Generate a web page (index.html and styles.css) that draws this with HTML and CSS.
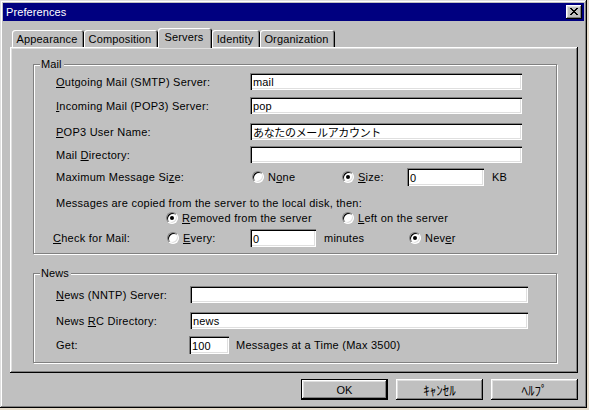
FILE: index.html
```html
<!DOCTYPE html>
<html>
<head>
<meta charset="utf-8">
<title>Preferences</title>
<link rel="stylesheet" href="styles.css">
</head>
<body>
<div class="window">
  <div class="titlebar">
    <span class="title">Preferences</span>
    <div class="close">
      <svg width="8" height="7" viewBox="0 0 8 7" shape-rendering="crispEdges">
        <rect x="0" y="0" width="2" height="1"/><rect x="6" y="0" width="2" height="1"/>
        <rect x="1" y="1" width="2" height="1"/><rect x="5" y="1" width="2" height="1"/>
        <rect x="2" y="2" width="4" height="1"/>
        <rect x="3" y="3" width="2" height="1"/>
        <rect x="2" y="4" width="4" height="1"/>
        <rect x="1" y="5" width="2" height="1"/><rect x="5" y="5" width="2" height="1"/>
        <rect x="0" y="6" width="2" height="1"/><rect x="6" y="6" width="2" height="1"/>
      </svg>
    </div>
  </div>

  <div class="body">
    <div class="tabs">
      <div class="tab t-app">Appearance</div>
      <div class="tab t-comp">Composition</div>
      <div class="tab t-serv active">Servers</div>
      <div class="tab t-id">Identity</div>
      <div class="tab t-org">Organization</div>
    </div>

    <div class="panel">
      <div class="group mail">
        <span class="legend">Mail</span>

        <div class="row mt8">
          <span class="lbl w194"><u>O</u>utgoing Mail (SMTP) Server:</span>
          <div class="field w272">mail</div>
        </div>
        <div class="row mt7">
          <span class="lbl w194"><u>I</u>ncoming Mail (POP3) Server:</span>
          <div class="field w272">pop</div>
        </div>
        <div class="row mt9">
          <span class="lbl w194"><u>P</u>OP3 User Name:</span>
          <div class="field w272 jp">あなたのメールアカウント</div>
        </div>
        <div class="row mt6">
          <span class="lbl w194">Mail <u>D</u>irectory:</span>
          <div class="field w272"></div>
        </div>
        <div class="row mt5 tall">
          <span class="lbl w196">Maximum Message Si<u>z</u>e:</span>
          <div class="opt w90"><span class="radio"></span><span>N<u>o</u>ne</span></div>
          <div class="opt w65"><span class="radio on"></span><span><u>S</u>ize:</span></div>
          <div class="field w77 h18">0</div>
          <span class="ml8">KB</span>
        </div>
        <div class="row text mt10">
          <span>Messages are copied from the server to the local disk, then:</span>
        </div>
        <div class="row text mt1 ind132">
          <div class="opt w176"><span class="radio on"></span><span><u>R</u>emoved from the server</span></div>
          <div class="opt"><span class="radio"></span><span><u>L</u>eft on the server</span></div>
        </div>
        <div class="row mt4 ind19 tall">
          <span class="lbl w114"><u>C</u>heck for Mail:</span>
          <div class="opt w83"><span class="radio"></span><span><u>E</u>very:</span></div>
          <div class="field w66 h18">0</div>
          <span class="ml8 w85">minutes</span>
          <div class="opt"><span class="radio on"></span><span>Nev<u>e</u>r</span></div>
        </div>
      </div>

      <div class="group news">
        <span class="legend">News</span>
        <div class="row mt12">
          <span class="lbl w134"><u>N</u>ews (NNTP) Server:</span>
          <div class="field w338"></div>
        </div>
        <div class="row mt9">
          <span class="lbl w134">News <u>R</u>C Directory:</span>
          <div class="field w338">news</div>
        </div>
        <div class="row mt7 tall">
          <span class="lbl w133">Get:</span>
          <div class="field w40 h18">100</div>
          <span class="ml7">Messages at a Time (Max 3500)</span>
        </div>
      </div>
    </div>

    <div class="buttons">
      <div class="btn default">OK</div>
      <div class="btn jp-btn">ｷｬﾝｾﾙ</div>
      <div class="btn jp-btn">ﾍﾙﾌﾟ</div>
    </div>
  </div>
</div>
</body>
</html>
```

FILE: styles.css
```css
html, body {
  margin: 0;
  padding: 0;
}
body {
  width: 589px;
  height: 410px;
  overflow: hidden;
  background: #e6dccb;
  font-family: "Liberation Sans", Arial, "Noto Sans CJK JP", sans-serif;
  font-size: 11px;
  color: #000;
}
u { text-decoration: underline; text-underline-offset: 1px; }

.window {
  width: 587px;
  height: 408px;
  box-sizing: border-box;
  padding: 3px;
  background: #c0c0c0;
  box-shadow: inset -1px -1px 0 #000, inset 1px 1px 0 #dfdfdf,
              inset -2px -2px 0 #808080, inset 2px 2px 0 #fff;
}

.titlebar {
  height: 18px;
  background: #000080;
  color: #fff;
  display: flex;
  align-items: center;
  justify-content: space-between;
  padding: 0 2px 0 3px;
}
.title { letter-spacing: 0.1px; }
.close {
  width: 16px;
  height: 14px;
  box-sizing: border-box;
  background: #c0c0c0;
  box-shadow: inset -1px -1px 0 #000, inset 1px 1px 0 #fff,
              inset -2px -2px 0 #808080, inset 2px 2px 0 #dfdfdf;
  display: flex;
  align-items: flex-start;
  padding: 3px 0 0 4px;
}
.close svg { display: block; fill: #000; }

.body {
  margin: 0 6px 0 7px;
}

.tabs {
  margin-top: 7px;
  height: 20px;
  display: flex;
  align-items: flex-end;
  padding-left: 2px;
}
.tab {
  height: 17px;
  margin-bottom: 1px;
  box-sizing: border-box;
  display: flex;
  align-items: center;
  justify-content: center;
  padding-right: 2px;
  padding-top: 1px;
  border-radius: 3px 3px 0 0;
  background: #c0c0c0;
  box-shadow: inset 1px 1px 0 #fff, inset -1px 0 0 #000, inset -2px 0 0 #808080;
  letter-spacing: 0.15px;
}
.tab.active {
  height: 20px;
  margin-bottom: 0;
  padding-top: 0;
  padding-bottom: 2px;
  position: relative;
  z-index: 2;
}
.t-app { width: 72px; }
.t-comp { width: 74px; }
.t-serv { width: 54px; }
.t-id { width: 48px; }
.t-org { width: 75px; }

.panel {
  margin-top: -1px;
  height: 326px;
  box-sizing: border-box;
  padding: 17px 21px 0 23px;
  background: #c0c0c0;
  box-shadow: inset -1px -1px 0 #000, inset 1px 1px 0 #fff,
              inset -2px -2px 0 #808080, inset 2px 2px 0 #dfdfdf;
}

.group {
  position: relative;
  box-sizing: border-box;
  border: 1px solid #808080;
  box-shadow: inset 1px 1px 0 #fff, 1px 1px 0 #fff;
}
.mail { height: 190px; }
.news { height: 90px; margin-top: 19px; }
.legend {
  position: absolute;
  top: -7px;
  left: 6px;
  height: 13px;
  line-height: 13px;
  padding: 0 2px 0 1px;
  background: #c0c0c0;
  letter-spacing: 0.1px;
}

.row {
  display: flex;
  align-items: center;
  height: 17px;
  padding-left: 22px;
  white-space: nowrap;
  letter-spacing: 0.25px;
}
.row.tall { height: 18px; }
.row.text { height: 14px; }
.ind132 { padding-left: 132px; }
.ind19 { padding-left: 19px; }

.mt1 { margin-top: 1px; }
.mt4 { margin-top: 4px; }
.mt5 { margin-top: 5px; }
.mt6 { margin-top: 6px; }
.mt7 { margin-top: 7px; }
.mt8 { margin-top: 8px; }
.mt9 { margin-top: 9px; }
.mt10 { margin-top: 10px; }
.mt12 { margin-top: 12px; }
.ml7 { margin-left: 7px; }
.ml8 { margin-left: 8px; }

.lbl { flex: none; }
.w194 { width: 194px; }
.w196 { width: 196px; }
.w114 { width: 114px; }
.w134 { width: 134px; }
.w133 { width: 133px; }
.w90 { width: 90px; }
.w65 { width: 65px; }
.w176 { width: 176px; }
.w83 { width: 83px; }
.w85 { width: 85px; display: inline-block; }
.w272 { width: 272px; }
.w338 { width: 338px; }
.w77 { width: 77px; }
.w66 { width: 66px; }
.w40 { width: 40px; }

.field {
  flex: none;
  height: 17px;
  box-sizing: border-box;
  background: #fff;
  padding: 1px 0 0 3px;
  display: flex;
  align-items: center;
  letter-spacing: 0.15px;
  box-shadow: inset 1px 1px 0 #808080, inset 2px 2px 0 #000,
              inset -1px -1px 0 #fff, inset -2px -2px 0 #dfdfdf;
}
.field.h18 { height: 18px; }
.field.jp {
  font-family: "Noto Sans CJK JP", sans-serif;
  font-size: 11px;
  letter-spacing: -0.33px;
  padding-top: 0;
}

.opt {
  flex: none;
  display: flex;
  align-items: center;
  gap: 4px;
}
.radio {
  flex: none;
  width: 12px;
  height: 12px;
  box-sizing: border-box;
  border-radius: 50%;
  background: #fff;
  border: 1px solid;
  border-color: #808080 #fff #fff #808080;
  box-shadow: inset 1px 1px 0 #000, inset -1px -1px 0 #dfdfdf;
}
.radio.on::after {
  content: "";
  display: block;
  width: 4px;
  height: 4px;
  margin: 3px;
  border-radius: 50%;
  background: #000;
}

.buttons {
  margin-top: 6px;
  display: flex;
  justify-content: flex-end;
  gap: 8px;
}
.btn {
  width: 87px;
  height: 21px;
  box-sizing: border-box;
  display: flex;
  align-items: center;
  justify-content: center;
  background: #c0c0c0;
  box-shadow: inset -1px -1px 0 #000, inset 1px 1px 0 #fff,
              inset -2px -2px 0 #808080, inset 2px 2px 0 #dfdfdf;
}
.btn.default {
  box-shadow: inset 0 0 0 1px #000, inset -2px -2px 0 #000, inset 2px 2px 0 #fff,
              inset -3px -3px 0 #808080, inset 3px 3px 0 #dfdfdf;
}
.jp-btn {
  font-family: "Noto Sans CJK JP", sans-serif;
  font-size: 13px;
}
```
